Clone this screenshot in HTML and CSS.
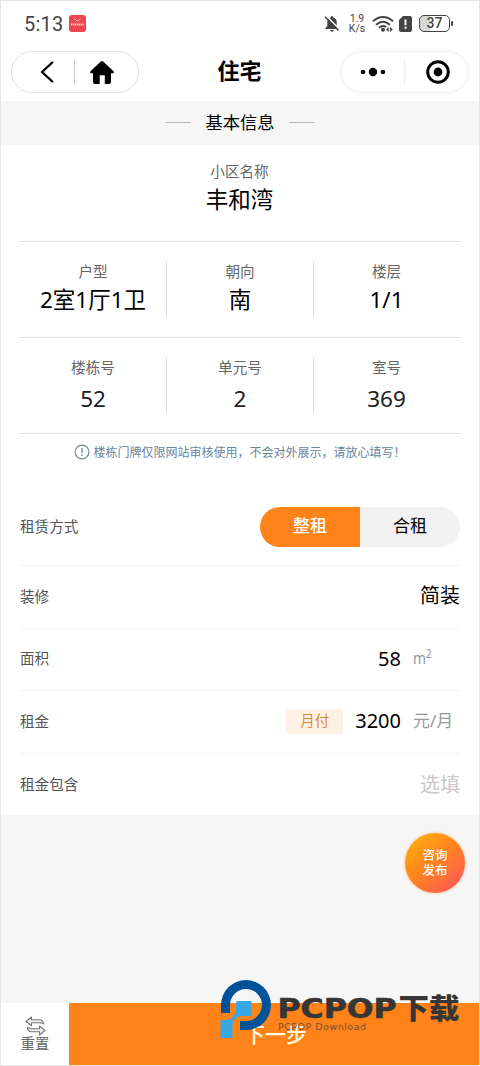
FILE: index.html
```
<!DOCTYPE html>
<html lang="zh-CN">
<head>
<meta charset="utf-8">
<title>住宅</title>
<link rel="stylesheet" href="styles.css">
</head>
<body>
<div class="screen">
  <div class="status">
    <span class="time">5:13</span>
    <svg class="app" width="17" height="17" viewBox="0 0 17 17"><rect width="17" height="17" rx="3" fill="#ee464d"/><path d="M5.500 3.500Q8.500 8 11.500 3.500" fill="none" stroke="#ffc4c4" stroke-width=".9"/><path d="M2 9.500H15" stroke="#ffd5d5" stroke-width="2" stroke-dasharray="1.3 .6"/></svg>
    <div class="status-right">
      <svg width="16" height="18" viewBox="0 0 16 18"><path d="M1.500 14V12.800L3.300 11V7Q3.300 3.600 6.700 2.800Q6.700 1 8 1Q9.300 1 9.300 2.800Q12.700 3.600 12.700 7V11L14.500 12.800V14ZM6 15H10Q9.500 16.800 8 16.800Q6.500 16.800 6 15Z" fill="#444"/><path d="M2.200 .9L15.500 14.300" stroke="#fff" stroke-width="1.500"/><path d="M1 1.800L14.500 15.500" stroke="#444" stroke-width="1.500"/></svg>
      <div class="speed"><span>1.9</span><span>K/s</span></div>
      <svg class="wifi" width="22" height="18" viewBox="0 0 22 18"><g fill="none" stroke="#444" stroke-width="1.900"><path d="M1 6.200Q11 -2 21 6.200"/><path d="M4 9.700Q11 3.700 18 9.700"/><path d="M7 12.700Q11 9.500 14 12"/></g><circle cx="11" cy="14.800" r="2" fill="#444"/><path d="M14 14.500L16.700 12V17ZM20.800 14.500L18 12V17Z" fill="#444"/></svg>
      <svg class="sim" width="13" height="16" viewBox="0 0 13 16"><path d="M4 0H11Q13 0 13 2V14Q13 16 11 16H2Q0 16 0 14V4Z" fill="#444"/><path d="M6.500 3.500V9.200M6.500 10.800V12.800" stroke="#fff" stroke-width="2"/></svg>
      <div class="battery"><span>37</span></div><i class="cap"></i>
    </div>
  </div>
  <header class="nav">
    <div class="pill pill-left">
      <svg width="14" height="22" viewBox="0 0 14 22"><path d="M12.300 1.500L2 11L12.300 20.500" fill="none" stroke="#000" stroke-width="2.300" stroke-linecap="round" stroke-linejoin="round"/></svg>
      <i class="sep"></i>
      <svg width="24" height="23" viewBox="0 0 24 23"><path d="M10.800 .5Q12 -.3 13.200 .5L23.500 10.200Q24.500 12 22.800 12.300H21V21Q21 23 19 23H14.800V14.300H9.700V23H5Q3 23 3 21V12.300H1.200Q-.5 12 .5 10.200Z" fill="#000"/></svg>
    </div>
    <h1 class="title">住宅</h1>
    <div class="pill pill-right">
      <svg width="26" height="10" viewBox="0 0 26 10"><circle cx="3" cy="5" r="2.300"/><circle cx="13" cy="5" r="4.200"/><circle cx="23" cy="5" r="2.300"/></svg>
      <i class="sep"></i>
      <svg width="24" height="24" viewBox="0 0 24 24"><circle cx="12" cy="12" r="10.300" fill="none" stroke="#000" stroke-width="2.900"/><circle cx="12" cy="12" r="4.400"/></svg>
    </div>
  </header>
  <div class="section"><i></i><span>基本信息</span><i></i></div>
  <main class="form">
    <div class="cells single"><div class="cell"><label>小区名称</label><b>丰和湾</b></div></div>
    <div class="cells">
      <div class="cell"><label>户型</label><b>2室1厅1卫</b></div>
      <div class="cell"><label>朝向</label><b>南</b></div>
      <div class="cell"><label>楼层</label><b>1/1</b></div>
    </div>
    <div class="cells numbers">
      <div class="cell"><label>楼栋号</label><b>52</b></div>
      <div class="cell"><label>单元号</label><b>2</b></div>
      <div class="cell"><label>室号</label><b>369</b></div>
    </div>
    <div class="notice">
      <svg width="16" height="16" viewBox="0 0 16 16"><circle cx="8" cy="8" r="6.900" fill="none" stroke="#68849d" stroke-width="1.100"/><path d="M8 4V9.200M8 10.500V12" stroke="#68849d" stroke-width="1.300"/></svg>
      <span>楼栋门牌仅限网站审核使用，不会对外展示，请放心填写！</span>
    </div>
    <div class="row row-mode"><span class="name">租赁方式</span><div class="toggle"><span class="on">整租</span><span>合租</span></div></div>
    <div class="row"><span class="name">装修</span><span class="value">简装</span></div>
    <div class="row"><span class="name">面积</span><span class="value">58</span><span class="unit area">m<sup>2</sup></span></div>
    <div class="row"><span class="name">租金</span><span class="tag">月付</span><span class="value">3200</span><span class="unit">元/月</span></div>
    <div class="row"><span class="name">租金包含</span><span class="value empty">选填</span></div>
  </main>
  <div class="filler"><div class="consult">咨询<br>发布</div></div>
  <footer class="bottom">
    <div class="reset">
      <svg width="21" height="20" viewBox="0 0 21 20"><g fill="#eee" stroke="#777" stroke-width="1.100" stroke-linejoin="round"><path d="M1 5.500L6.500 1V3.700H14Q18 3.700 18.700 8Q17 6.800 14 6.800H6.500V9.800Z"/><path d="M20 14.500L14.500 10V12.700H7Q5 12.700 2.300 11.300Q3 15.800 7 15.800H14.500V19Z"/></g></svg>
      <span>重置</span>
    </div>
    <div class="next">下一步</div>
  </footer>
  <svg class="watermark" width="242" height="62" viewBox="0 0 242 62">
    <path d="M1 34V26A25 25 0 1 1 26 51H20V42H25.500A16 16 0 1 0 10 26V34Z" fill="#005299"/>
    <path d="M18 22H31.500V37H22Q12.500 38 12.500 46V59H.500V41H6Q15 40 16 30V24Q16 22 18 22Z" fill="#38a7e4"/>
    <text class="brand" x="57.500" y="38.500" textLength="119" lengthAdjust="spacingAndGlyphs">PCPOP</text>
    <text class="brand-cn" x="178.500" y="39.500" textLength="61" lengthAdjust="spacingAndGlyphs">下载</text>
    <text class="brand-sub" x="58" y="51" textLength="88">PCPOP Download</text>
  </svg>
</div>
</body>
</html>
```

FILE: styles.css
```
* { box-sizing: border-box; }
body { margin: 0; background: #fff; font-family: "Noto Sans", "Noto Sans CJK SC", sans-serif; color: #000; }
svg { display: block; flex: none; }
.screen { position: relative; width: 480px; height: 1066px; border: 1px solid #e5e5e5; display: flex; flex-direction: column; overflow: hidden; }

.status { height: 45px; display: flex; align-items: center; padding: 0 26px 0 23px; }
.time { font: 20px/24px Roboto, sans-serif; color: #444; letter-spacing: .2px; width: 45px; }
.status-right { display: flex; align-items: center; margin-left: auto; }
.speed { display: flex; flex-direction: column; align-items: center; width: 18px; margin: 0 6px 0 8px; font: 10.500px/10px Roboto, sans-serif; color: #444; }
.sim { margin: 0 7px 0 5px; }
.battery { width: 31px; height: 17px; border: 1.5px solid #444; border-radius: 5px; background: linear-gradient(90deg, #d8d8d8 34%, #fff 34%); font: 500 14px/15px Roboto, sans-serif; color: #444; text-align: center; }
.cap { width: 2px; height: 5px; background: #444; margin-left: 1px; border-radius: 1px; }

.nav { height: 55px; display: flex; justify-content: space-between; padding: 5px 10px 0; }
.pill { display: flex; align-items: center; border: 1px solid #dedede; border-radius: 22px; height: 42px; }
.pill-left { width: 128px; padding-left: 28px; }
.pill-left .sep { width: 1px; height: 24px; background: #ccc; margin: 0 15px 0 20px; }
.pill-right { width: 129px; padding-left: 19px; border-color: #ebebeb; }
.pill-right .sep { width: 1px; height: 27px; background: #eee; margin: 0 21px 0 18px; }
.title { margin: 0; font-size: 22px; line-height: 39px; font-weight: 700; }

.section { height: 44px; display: flex; align-items: center; justify-content: center; gap: 14px; background: #f6f6f6; font-size: 17.300px; line-height: 24px; padding-bottom: 1px; }
.section i { width: 26px; height: 1px; background: #bbb; }

.form { height: 670px; padding: 0 19px; }
.cells { display: grid; grid-template-columns: 147px 147px 146px; height: 96px; padding: 19px 0; border-bottom: 1px solid #dedede; }
.single { grid-template-columns: 1fr; height: 97px; padding-top: 16px; }
.cell { display: flex; flex-direction: column; align-items: center; padding-right: 1px; }
.cell:not(:last-child) { border-right: 1px solid #dedede; padding-right: 0; }
.cell label { font-size: 14.600px; line-height: 20px; color: #666; }
.cell b { font-weight: 400; font-size: 22.500px; line-height: 30px; margin-top: 4px; }
.numbers b { color: #222; margin-top: 7px; }

.notice { display: flex; align-items: center; justify-content: center; gap: 3px; height: 35px; font-size: 12px; color: #68849d; white-space: nowrap; }

.row { display: flex; align-items: center; height: 62.600px; border-bottom: 1px solid #f3f3f3; }
.row:last-child { border-bottom: 0; }
.row-mode { height: 97px; padding-top: 19px; }
.name { flex: 1; font-size: 14.600px; line-height: 22px; color: #555; padding-bottom: 2px; }
.value { font-size: 20px; line-height: 30px; padding-bottom: 1px; }
.empty { color: #c8c8c8; }
.unit { width: 47px; margin-left: 12px; font-size: 17px; line-height: 24px; color: #999; white-space: nowrap; padding-bottom: 2px; }
.unit sup { font-size: 12px; line-height: 1; vertical-align: 6px; }
.area { transform: scaleX(.82); transform-origin: left; }
.tag { width: 57px; height: 25px; margin-right: 12px; background: #fff2e4; color: #dc8a3c; font-size: 14.500px; line-height: 23px; text-align: center; }
.toggle { display: flex; width: 200px; height: 40px; border-radius: 20px; overflow: hidden; background: #f2f2f2; font-size: 17px; line-height: 38px; text-align: center; }
.toggle span { flex: 1; }
.toggle .on { background: #ff8319; color: #fff; font-weight: 500; }

.filler { height: 188px; background: #f6f6f6; padding: 18px 14px; display: flex; justify-content: flex-end; }
.consult { width: 60px; height: 60px; border-radius: 50%; padding-top: 15px; background: linear-gradient(140deg, #ffb00e 5%, #ff8120 50%, #ff5269 100%); box-shadow: 0 0 3px #ffb67a; color: #fff; font-size: 12.500px; line-height: 15px; font-weight: 500; text-align: center; }

.bottom { flex: 1; display: flex; }
.reset { width: 68px; display: flex; flex-direction: column; align-items: center; padding-top: 13px; font-size: 14.500px; line-height: 15px; color: #666; }
.next { flex: 1; background: #ff8319; color: #fff7df; font-size: 21px; line-height: 62px; font-weight: 500; text-align: center; padding-left: 3px; }

.watermark { position: absolute; left: 219px; top: 978px; }
.brand { font: 700 26px "DejaVu Sans", sans-serif; fill: #363636; stroke: #363636; stroke-width: .6px; }
.brand-cn { font: 900 28px "Noto Sans CJK SC", sans-serif; fill: #363636; }
.brand-sub { font: 9.500px "DejaVu Sans", sans-serif; fill: #765039; }
```
